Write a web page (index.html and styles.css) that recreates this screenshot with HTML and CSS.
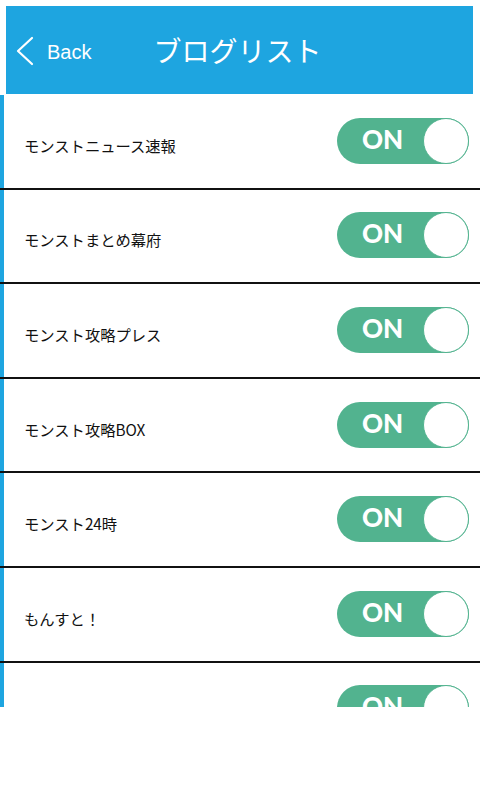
FILE: index.html
```html
<!DOCTYPE html>
<html lang="ja">
<head>
    <meta charset="UTF-8">
    <meta name="viewport" content="width=device-width, initial-scale=1.0">
    <title>ブログリスト</title>
    <link rel="stylesheet" href="styles.css">
</head>
<body>
    <div class="header">
        <a class="back" href="#">
            <svg width="18" height="30" viewBox="0 0 18 30">
                <polyline points="16,2 2,15 16,28" fill="none" stroke="#fff" stroke-width="2.2" stroke-linecap="round" stroke-linejoin="round"/>
            </svg>
            <span>Back</span>
        </a>
        <h1>ブログリスト</h1>
    </div>
    <div class="list">
        <div class="row">
            <span class="name">モンストニュース速報</span>
            <div class="toggle"><span>ON</span><div class="knob"></div></div>
        </div>
        <div class="row">
            <span class="name">モンストまとめ幕府</span>
            <div class="toggle"><span>ON</span><div class="knob"></div></div>
        </div>
        <div class="row">
            <span class="name">モンスト攻略プレス</span>
            <div class="toggle"><span>ON</span><div class="knob"></div></div>
        </div>
        <div class="row">
            <span class="name">モンスト攻略BOX</span>
            <div class="toggle"><span>ON</span><div class="knob"></div></div>
        </div>
        <div class="row">
            <span class="name">モンスト24時</span>
            <div class="toggle"><span>ON</span><div class="knob"></div></div>
        </div>
        <div class="row">
            <span class="name">もんすと！</span>
            <div class="toggle"><span>ON</span><div class="knob"></div></div>
        </div>
        <div class="row">
            <span class="name">APPMEDIA</span>
            <div class="toggle"><span>ON</span><div class="knob"></div></div>
        </div>
    </div>
</body>
</html>
```

FILE: styles.css
```css
body {
    margin: 0;
    background-color: #fff;
    font-family: 'Noto Sans CJK JP', 'Noto Sans', sans-serif;
    color: #111;
}
.header {
    position: relative;
    margin: 6px 7px 0 6px;
    height: 88px;
    background-color: #1ea5e0;
    display: flex;
    align-items: center;
    justify-content: center;
    color: #fff;
}
.back {
    position: absolute;
    left: 10px;
    top: 30px;
    display: flex;
    align-items: center;
    gap: 13px;
    text-decoration: none;
    color: #fff;
}
.back span {
    font-family: 'Liberation Sans', Arial, sans-serif;
    font-size: 20px;
    margin-top: 2px;
}
.header h1 {
    margin: 0;
    font-size: 28px;
    font-weight: 400;
    margin-right: 4px;
}
.list {
    height: 612px;
    overflow: hidden;
    margin-top: 1px;
}
.row {
    box-sizing: border-box;
    height: 94.6px;
    border-bottom: 2px solid #111;
    box-shadow: inset 4px 0 0 #1ea5e0;
    display: flex;
    align-items: center;
    justify-content: space-between;
    padding: 0 11px 0 24px;
}
.name {
    font-size: 15.3px;
    margin-top: 7px;
}
.toggle {
    position: relative;
    box-sizing: border-box;
    width: 132px;
    height: 46px;
    border-radius: 23px;
    background-color: #52b38f;
    margin-top: -1px;
}
.toggle span {
    position: absolute;
    left: 25px;
    top: 5px;
    font-family: 'Lato', sans-serif;
    font-weight: 900;
    font-size: 26px;
    color: #fff;
}
.knob {
    position: absolute;
    right: 0;
    top: 0;
    box-sizing: border-box;
    width: 46px;
    height: 46px;
    border-radius: 50%;
    background-color: #fff;
    border: 1.5px solid #52b38f;
}
```
